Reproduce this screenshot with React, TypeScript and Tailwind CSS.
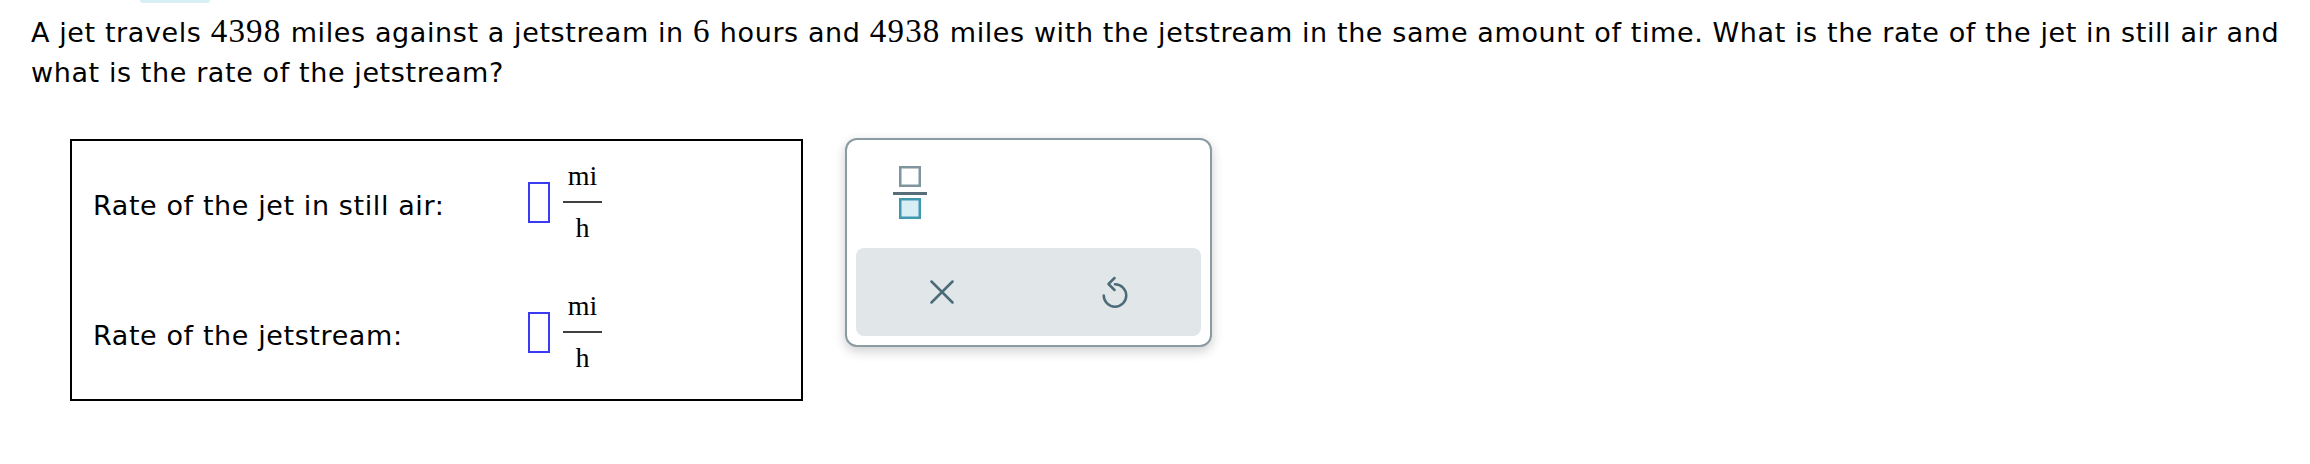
import React from "react";

const sans = { fontFamily: '"DejaVu Sans", Verdana, sans-serif' };
const serif = { fontFamily: '"Liberation Serif", "Times New Roman", serif' };

function Num({ children }: { children: React.ReactNode }) {
  return (
    <span className="text-[33px] leading-none tracking-[1.2px]" style={serif}>
      {children}
    </span>
  );
}

function Fraction() {
  return (
    <div className="ml-[13px] flex flex-col items-center text-[28px] text-black" style={serif}>
      <span className="h-[28px] leading-[28px]">mi</span>
      <div className="mt-[11px] mb-[11px] h-[2px] w-[39px] bg-[#404040]" />
      <span className="h-[28px] leading-[28px]">h</span>
    </div>
  );
}

function Row({ label }: { label: string }) {
  return (
    <div className="flex h-[42px] items-center">
      <div className="mt-[8px] w-[435px] text-[27px] leading-[40px] tracking-[0.6px] text-black" style={sans}>
        {label}
      </div>
      <div className="h-[41px] w-[22px] border-2 border-[#3a3af2]" />
      <Fraction />
    </div>
  );
}

function FracIcon() {
  return (
    <svg width="34" height="53" viewBox="0 0 34 53">
      <rect x="7.25" y="1.25" width="19.5" height="18.5" fill="#ffffff" stroke="#7f959d" strokeWidth="2.5" />
      <rect x="0" y="26" width="34" height="3" fill="#576e78" />
      <rect x="7.25" y="33.25" width="19.5" height="18.5" fill="#d6eef4" stroke="#3f98ae" strokeWidth="2.5" />
    </svg>
  );
}

function XIcon() {
  return (
    <svg width="24" height="24" viewBox="0 0 24 24" fill="none" stroke="#4b6b78" strokeWidth="2.5" strokeLinecap="round">
      <line x1="1.5" y1="1.5" x2="22.5" y2="22.5" />
      <line x1="22.5" y1="1.5" x2="1.5" y2="22.5" />
    </svg>
  );
}

function UndoIcon() {
  return (
    <svg width="28" height="34" viewBox="0 0 28 34" fill="none" stroke="#4b6b78" strokeWidth="2.5" strokeLinecap="round" strokeLinejoin="round">
      <path d="M14 9.25 A11.25 11.25 0 1 1 2.75 20.5" />
      <path d="M13.5 3 L7.5 9 L13.5 15" />
    </svg>
  );
}

export default function App() {
  return (
    <div className="h-[464px] w-[2310px] overflow-hidden bg-white">
      <div className="ml-[140px] h-[3px] w-[70px] rounded-b-[10px] bg-[#d9eff6]" />
      <p className="ml-[31px] mt-[10px] h-[80px] whitespace-nowrap text-[27px] leading-[40px] tracking-[0.6px] text-black" style={sans}>
        A jet travels <Num>4398</Num> miles against a jetstream in <Num>6</Num> hours and <Num>4938</Num> miles with the
        jetstream in the same amount of time. What is the rate of the jet in still air and
        <br />
        what is the rate of the jetstream?
      </p>
      <div className="ml-[70px] mt-[45px] flex items-start gap-[42px]">
        <div className="mt-[1px] flex h-[262px] w-[733px] flex-col gap-[88px] border-2 border-black pl-[21px] pt-[40px]">
          <Row label="Rate of the jet in still air:" />
          <Row label="Rate of the jetstream:" />
        </div>
        <div className="flex h-[209px] w-[367px] flex-col rounded-[12px] border-2 border-[#8a9ba2] bg-white px-[9px] pt-[26px] shadow-[0_4px_12px_rgba(0,0,0,0.2)]">
          <div className="ml-[37px]">
            <FracIcon />
          </div>
          <div className="mt-[29px] flex h-[88px] rounded-[8px] bg-[#e1e6e9]">
            <div className="flex flex-1 items-center justify-center">
              <XIcon />
            </div>
            <div className="flex flex-1 items-center justify-center">
              <UndoIcon />
            </div>
          </div>
        </div>
      </div>
    </div>
  );
}
